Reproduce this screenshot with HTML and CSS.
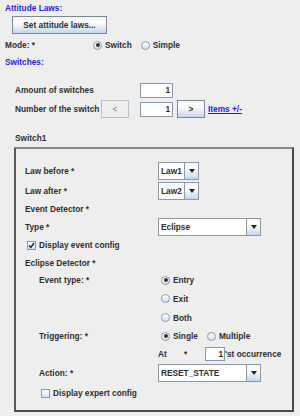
FILE: index.html
```html
<!DOCTYPE html>
<html lang="en">
<head>
    <meta charset="UTF-8">
    <title>Attitude Laws</title>
    <link rel="stylesheet" href="styles.css">
</head>
<body>
    <div class="heading">Attitude Laws:</div>
    <div class="btn-row">
        <button class="btn wide">Set attitude laws...</button>
    </div>
    <div class="mode-row">
        <span class="mode-label">Mode: *</span>
        <span class="radio checked"></span><span class="opt">Switch</span>
        <span class="radio"></span><span class="opt">Simple</span>
    </div>
    <div class="heading">Switches:</div>

    <div class="field-row amount">
        <span class="lbl amount-lbl">Amount of switches</span>
        <input class="num" type="text" value="1">
    </div>
    <div class="field-row number">
        <span class="lbl number-lbl">Number of the switch</span>
        <button class="btn nav" disabled>&lt;</button>
        <input class="num" type="text" value="1">
        <button class="btn nav next">&gt;</button>
        <a class="link" href="#">Items +/-</a>
    </div>

    <div class="switch-title">Switch1</div>
    <div class="panel">
        <div class="lbl">Law before *</div>
        <div><span class="combo law"><span class="combo-text">Law1</span><span class="arrow"></span></span></div>

        <div class="lbl">Law after *</div>
        <div><span class="combo law"><span class="combo-text">Law2</span><span class="arrow"></span></span></div>

        <div class="lbl full">Event Detector *</div>

        <div class="lbl">Type *</div>
        <div><span class="combo long"><span class="combo-text">Eclipse</span><span class="arrow"></span></span></div>

        <div class="full check-row">
            <span class="check checked">
                <svg width="7" height="7" viewBox="0 0 7 7"><polyline points="1,3.5 2.8,5.5 6,1" fill="none" stroke="#222" stroke-width="1.4"/></svg>
            </span>
            <span class="opt">Display event config</span>
        </div>

        <div class="lbl full">Eclipse Detector *</div>

        <div class="lbl sub">Event type: *</div>
        <div class="choice"><span class="radio checked"></span><span class="opt">Entry</span></div>

        <div></div>
        <div class="choice"><span class="radio"></span><span class="opt">Exit</span></div>

        <div></div>
        <div class="choice"><span class="radio"></span><span class="opt">Both</span></div>

        <div class="lbl sub">Triggering: *</div>
        <div class="choice">
            <span class="radio checked"></span><span class="opt">Single</span>
            <span class="radio multi"></span><span class="opt">Multiple</span>
        </div>

        <div></div>
        <div class="at-row">
            <span class="lbl at">At</span>
            <span class="lbl star">*</span>
            <input class="num small" type="text" value="1">
            <span class="lbl">'st occurrence</span>
        </div>

        <div class="lbl sub">Action: *</div>
        <div><span class="combo long"><span class="combo-text">RESET_STATE</span><span class="arrow"></span></span></div>

        <div class="full check-row expert">
            <span class="check"></span>
            <span class="opt">Display expert config</span>
        </div>
    </div>
</body>
</html>
```

FILE: styles.css
```css
body {
    margin: 0;
    background-color: #eeeeee;
    font-family: "Liberation Sans", Arial, sans-serif;
    font-size: 8.3px;
    font-weight: bold;
    color: #2e2e2e;
}
.heading {
    height: 12px;
    line-height: 12px;
    margin-top: 2px;
    padding-left: 5px;
    color: #2323f5;
}
.btn-row {
    margin-top: 2px;
    padding-left: 12px;
    height: 18px;
}
.btn {
    font-family: inherit;
    font-size: 8.3px;
    font-weight: bold;
    color: #2e2e2e;
    height: 18px;
    padding: 0;
    border: 1px solid #7a8a99;
    background: linear-gradient(#f2f6fa, #ffffff 35%, #dfe9f3 70%, #c5d7e8);
    box-sizing: border-box;
}
.btn.wide {
    width: 95px;
}
.mode-row {
    margin-top: 2px;
    height: 18px;
    display: flex;
    align-items: center;
    padding-left: 5px;
}
.mode-label {
    width: 88px;
}
.radio {
    width: 9px;
    height: 9px;
    border-radius: 50%;
    border: 1px solid #8a9aab;
    box-sizing: border-box;
    background: linear-gradient(#ffffff, #d6e2ee);
    display: inline-flex;
    align-items: center;
    justify-content: center;
    flex: none;
}
.radio.checked::after {
    content: "";
    width: 4px;
    height: 4px;
    border-radius: 50%;
    background-color: #333;
}
.opt {
    margin-left: 3px;
    margin-right: 9px;
}
.field-row {
    display: flex;
    align-items: center;
    padding-left: 15px;
}
.field-row.amount {
    margin-top: 14px;
    height: 16px;
}
.field-row.number {
    margin-top: 2px;
    height: 18px;
}
.amount-lbl {
    width: 125px;
}
.number-lbl {
    width: 86px;
}
.num {
    width: 33px;
    height: 15px;
    box-sizing: border-box;
    border: 1px solid #8899aa;
    background-color: #fff;
    font-family: inherit;
    font-size: 8.3px;
    font-weight: bold;
    color: #2e2e2e;
    text-align: right;
    padding: 0 2px 0 0;
    margin: 0;
}
.btn.nav {
    width: 28px;
    margin-right: 11px;
}
.btn.nav:disabled {
    background: #eeeeee;
    border-color: #b8c2cc;
    color: #999;
}
.btn.nav.next {
    margin-left: 4px;
    margin-right: 3px;
}
.link {
    color: #1a1aff;
    text-decoration: underline;
}
.switch-title {
    margin-top: 14px;
    height: 12px;
    line-height: 12px;
    padding-left: 15px;
}
.panel {
    margin: 3px 0 0 14px;
    width: 280px;
    box-sizing: border-box;
    border: 2px solid #4a4a4a;
    border-top-color: #8a8a8a;
    border-left-color: #5a5a5a;
    padding: 12px 0 7px 9px;
    display: grid;
    grid-template-columns: 133px 1fr;
    grid-template-rows: 20px 19px 18px 18px 18px 17px 18px 19px 19px 18px 18px 20px 20px;
    align-items: center;
}
.full {
    grid-column: 1 / -1;
}
.sub {
    padding-left: 14px;
}
.combo {
    display: inline-flex;
    height: 18px;
    box-sizing: border-box;
    border: 1px solid #8899aa;
    background-color: #fff;
    vertical-align: middle;
}
.combo.law {
    width: 41px;
}
.combo.long {
    width: 103px;
}
.combo-text {
    flex: 1;
    line-height: 16px;
    padding-left: 2px;
    background: #fff;
}
.arrow {
    width: 13px;
    border-left: 1px solid #8899aa;
    background: linear-gradient(#f2f6fa, #ffffff 35%, #dfe9f3 70%, #c5d7e8);
    display: flex;
    align-items: center;
    justify-content: center;
}
.arrow::after {
    content: "";
    border-left: 3.5px solid transparent;
    border-right: 3.5px solid transparent;
    border-top: 4px solid #222;
}
.check-row {
    display: flex;
    align-items: center;
    padding-left: 2px;
}
.check-row.expert {
    padding-left: 16px;
}
.check {
    width: 9px;
    height: 9px;
    box-sizing: border-box;
    border: 1px solid #8a9aab;
    background: linear-gradient(#ffffff, #d6e2ee);
    display: inline-flex;
    align-items: center;
    justify-content: center;
}
.choice {
    display: flex;
    align-items: center;
    padding-left: 3px;
}
.at-row {
    display: flex;
    align-items: center;
}
.at {
    width: 26px;
}
.star {
    width: 21px;
}
.num.small {
    width: 20px;
    height: 14px;
    padding-right: 1px;
}
```
